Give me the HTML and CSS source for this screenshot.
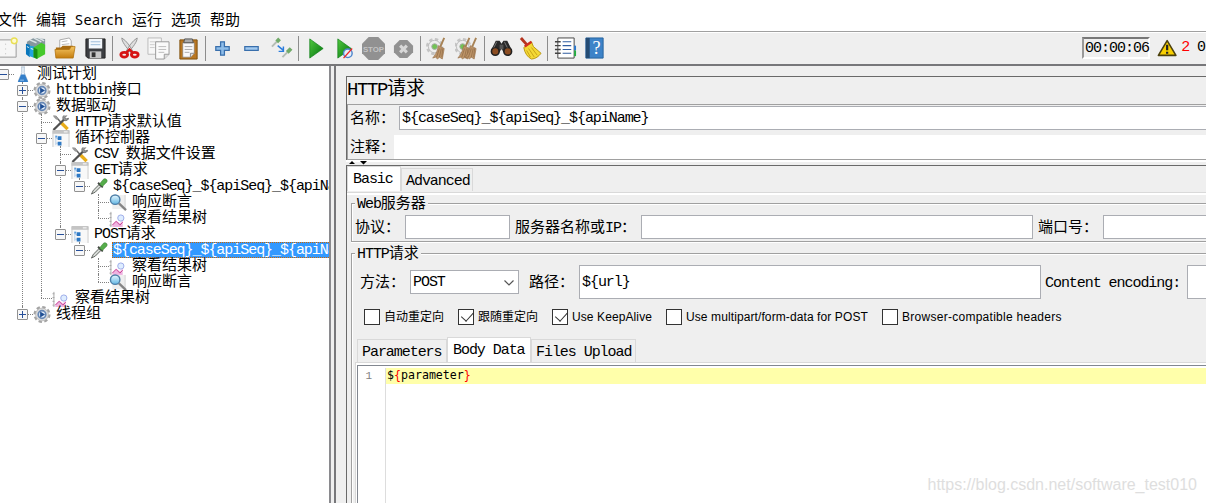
FILE: index.html
```html
<!DOCTYPE html>
<html lang="zh-CN">
<head>
    <meta charset="UTF-8">
    <meta name="viewport" content="width=device-width, initial-scale=1.0">
    <title>HTTP请求</title>
    <link rel="stylesheet" href="styles.css">
</head>
<body>
    <!-- Shared icons -->
    <svg class="defs">
        <defs>
            <linearGradient id="glass" x2="0" y2="1"><stop stop-color="#e8f8ff"/><stop offset="1" stop-color="#62b7e4"/></linearGradient>
            <linearGradient id="green" x2="1" y2="1"><stop stop-color="#52c840"/><stop offset="1" stop-color="#00730c"/></linearGradient>
            <linearGradient id="gold" x2="0" y2="1"><stop stop-color="#f4c562"/><stop offset="1" stop-color="#c57d0d"/></linearGradient>
        </defs>
        <symbol id="gear" viewBox="0 0 18 18">
            <circle cx="9" cy="9" r="7.600" fill="none" stroke="#a3a3a3" stroke-width="2.800" stroke-dasharray="3.500 2.470"/>
            <circle cx="9" cy="9" r="6.800" fill="#dcdcdc" stroke="#b5b5b5" stroke-width=".8"/>
            <circle cx="9" cy="9" r="4" fill="#e4eefa" stroke="#6788b5" stroke-width="1.800"/>
            <path d="M7 5.800L12.200 9 7 12.200z" fill="#1f4f94"/>
        </symbol>
        <symbol id="flask" viewBox="0 0 18 18">
            <path d="M7 1h4M7.7 1v6L4 16h10L10.3 7V1" fill="#edf5fc" stroke="#b0c1d2"/>
            <path d="M7 9L3.500 17h11L11 9z" fill="#347fca"/>
            <path d="M6 15h4" stroke="#98c5ef"/>
        </symbol>
        <symbol id="tools" viewBox="0 0 18 18">
            <path d="M3 2l6 7" stroke="#666" stroke-width="1.6"/>
            <path d="M9 9l7 7" stroke="#e9ad19" stroke-width="3.6"/>
            <path d="M1 17L12.5 5.5" stroke="#505050" stroke-width="2.4"/>
            <path d="M12 1.5c-2 2-1 5 1 5.500s4-1 4-2.500l-3 .8-.8-1.300 2-2.500" fill="#999" stroke="#555" stroke-width=".7"/>
            <path d="M1 1l3 1 2 3-2 1-3-3z" fill="#999"/>
        </symbol>
        <symbol id="loop" viewBox="0 0 18 18">
            <path d="M1 1h16v17H1z" fill="#f8f8f8"/>
            <path d="M.5 1v17M17.500 1v17" stroke="#c8c8c8"/>
            <path d="M0 0h18v4H0z" fill="#c4c4c4"/>
            <path d="M12 2h4" stroke="#fff"/>
            <path d="M3.500 6v10M3.500 9H6M3.500 14H6" stroke="#b9d0e8" fill="none"/>
            <path d="M5.500 6.500h4v4h-4zM5.500 12.500h4v4h-4z" fill="#2d78c4"/>
            <path d="M3 6h2v2H3z" fill="#5c9ede"/>
        </symbol>
        <symbol id="dropper" viewBox="0 0 18 18">
            <path d="M1 17l2-4 6-6 2 2-6 6z" fill="#d6dad6" stroke="#5c615c"/>
            <path d="M8 5l5 5" stroke="#444" stroke-width="2"/>
            <path d="M9.500 6.500l4-5c2-2 5.500.5 3.500 3L12.500 9z" fill="#55ad4b" stroke="#387b31" stroke-width=".6"/>
        </symbol>
        <symbol id="magnifier" viewBox="0 0 18 18">
            <path d="M3 1h14v15H3z" fill="#efefef"/>
            <path d="M16.500 1v14" stroke="#d5d5d5"/>
            <path d="M10 10l7.500 7" stroke="#858585" stroke-width="2.500"/>
            <circle cx="6" cy="6" r="5" fill="url(#glass)" stroke="#4e7fa8" stroke-width="1.500"/>
        </symbol>
        <symbol id="chart" viewBox="0 0 18 18">
            <path d="M1.500 2v16M0 4h2M0 8h2M0 12h2M0 16h2" stroke="#a5a5a5" fill="none"/>
            <path d="M3 18v-3l4-4 4 3 3-3v7z" fill="#efb4e1"/>
            <path d="M3 16l4-4 4 4 3-3" fill="none" stroke="#c64591"/>
            <circle cx="12" cy="8.500" r="3.300" fill="#deedff" stroke="#9aa9e8"/>
        </symbol>
        <symbol id="broom" viewBox="0 0 24 24">
            <path d="M18 1l-4 9" stroke="#a88355" stroke-width="2"/>
            <path d="M12 9l6 3-2 11-3-2-2 2-2-2-3 1c4-5 5-8 6-13z" fill="#bd9468" stroke="#98714a" stroke-width=".7"/>
            <path d="M13 12l-3 9M15 12l-2 9M16.500 12l-1 9" stroke="#8c6845" stroke-width=".7"/>
        </symbol>
        <symbol id="cog" viewBox="0 0 24 24">
            <circle cx="9" cy="10" r="7.500" fill="none" stroke="#c5c5c5" stroke-width="3" stroke-dasharray="3.400 2.500"/>
            <circle cx="9" cy="10" r="6.500" fill="#eee" stroke="#bcbcbc"/>
            <circle cx="9" cy="10" r="3" fill="#71c354" stroke="#aaa"/>
        </symbol>
    </svg>

    <nav class="menu">
        <span>文件</span><span>编辑</span><span class="search">Search</span><span>运行</span><span>选项</span><span>帮助</span>
    </nav>

    <div class="toolbar">
        <div class="tools">
            <i><svg viewBox="0 0 24 24"><path d="M1 3h20v18H1z" fill="#f6f6f6" stroke="#999"/><path d="M10 7v12" stroke="#bbb" stroke-dasharray="1 4"/><circle cx="19" cy="4" r="3" fill="#fffbd0" stroke="#e9df55" stroke-width="1.500"/></svg></i>
            <i><svg viewBox="0 0 24 24"><path d="M2 5l7-4 12 1v10L8 19l-6-2z" fill="#86979e"/><path d="M5 3l7 3M9 1l8 4M14 1l6 3" stroke="#dce4e7" stroke-width="1.500"/><path d="M1 7l4 1v13l-4-3z" fill="#0876bc"/><path d="M5 9l5 1v12l-5-2z" fill="#20a4df"/><path d="M2 10l2 1M6 12l3 1" stroke="#fff"/><path d="M9 11l8-5 4 2v10l-9 5-3-2z" fill="#46c92c"/><path d="M9 11l4 2v10l-4-2z" fill="#198e12"/></svg></i>
            <i><svg viewBox="0 0 24 24"><path d="M6 13V3l10-2 2 3v11z" fill="#fff" stroke="#aaa"/><path d="M8 5l6-1M8 8l8-1M8 11h8" stroke="#bbb"/><path d="M2 11h5l2-2h11v12H2z" fill="#a86b12"/><path d="M1 13h15l2-3h4l-2 12H2z" fill="url(#gold)" stroke="#b0720f" stroke-width=".8"/></svg></i>
            <i><svg viewBox="0 0 24 24"><path d="M2 2h20v20H4l-2-2z" fill="#3c3e42" stroke="#222"/><path d="M5 2h14v10H5z" fill="#f4f8fc"/><path d="M7 5h10M7 8h10" stroke="#9bbbd9"/><path d="M6 15h12v7H6z" fill="#c8c8c8"/><path d="M8 16h4v5H8z" fill="#333"/></svg></i>
            <b></b>
            <i><svg viewBox="0 0 24 24"><path d="M4 1c0 4 4 9 10 16l2-1C13 10 9 4 4 1zM20 1c0 4-4 9-10 16l-2-1C11 10 15 4 20 1z" fill="#dedede" stroke="#929292"/><ellipse cx="6.500" cy="18.500" rx="3.500" ry="2.500" fill="none" stroke="#d61414" stroke-width="3"/><ellipse cx="17.500" cy="18.500" rx="3.500" ry="2.500" fill="none" stroke="#d61414" stroke-width="3"/><path d="M9 16l3-3 3 3" fill="none" stroke="#d61414" stroke-width="2.500"/></svg></i>
            <i><svg viewBox="0 0 24 24"><path d="M1 1h14v17H1z" fill="#f7f7f7" stroke="#bbb"/><path d="M3 5h9M3 8h5M3 11h5" stroke="#ccc"/><path d="M9 5h14v13l-5 5H9z" fill="#fafafa" stroke="#999"/><path d="M12 10h8M12 13h8M12 16h6" stroke="#bbb"/><path d="M18 23v-5h5" fill="#ddd" stroke="#999"/></svg></i>
            <i><svg viewBox="0 0 24 24"><path d="M3 3h18v20H3z" fill="#b97722" stroke="#80500e"/><path d="M6 6h12v11l-4 4H6z" fill="#fafafa" stroke="#777" stroke-width=".6"/><path d="M8 10h8M8 13h8M8 16h5" stroke="#aaa"/><path d="M14 21v-4h4" fill="#ddd" stroke="#888"/><path d="M8 2h8l1 4H7z" fill="#aaa" stroke="#555"/></svg></i>
            <b></b>
            <i><svg viewBox="0 0 24 24"><path d="M10 5h4v5h5v4h-5v5h-4v-5H5v-4h5z" fill="#8ebde9" stroke="#396fac" stroke-width="1.300"/></svg></i>
            <i><svg viewBox="0 0 24 24"><path d="M5 10h14v4H5z" fill="#a2caf0" stroke="#396fac" stroke-width="1.300"/></svg></i>
            <i><svg viewBox="0 0 24 24"><path d="M2 10l5-5M13 21l5-5" stroke="#b5bdb5" stroke-width="2"/><path d="M7 5l3-3M18 16l4-4" stroke="#71aa69" stroke-width="4"/><path d="M8 9l6 5m0-4v5H9" fill="none" stroke="#2a7cdd" stroke-width="1.500"/></svg></i>
            <b></b>
            <i><svg viewBox="0 0 24 24"><path d="M6 2l14 10L6 22z" fill="url(#green)" stroke="#087b10" stroke-width=".7"/></svg></i>
            <i><svg viewBox="0 0 24 24"><path d="M5 2l14 10L5 22z" fill="url(#green)" stroke="#087b10" stroke-width=".7"/><circle cx="15.500" cy="17" r="4.500" fill="#e6effa" stroke="#4f86cc" stroke-width="1.500"/><path d="M11 22l9-10" stroke="#e22" stroke-width="1.300"/></svg></i>
            <i><svg viewBox="0 0 24 24"><path d="M7 0h10l7 7v10l-7 7H7l-7-7V7z" fill="#919191"/><text x="12" y="15.500" text-anchor="middle" class="stop">STOP</text></svg></i>
            <i><svg viewBox="0 0 24 24"><path d="M8 3h8l6 6v7l-6 6H8l-6-6V9z" fill="#929292"/><path d="M8.500 9l7 7M15.500 9l-7 7" stroke="#d8d8d8" stroke-width="3.200"/></svg></i>
            <b></b>
            <i><svg viewBox="0 0 24 24"><use href="#cog"/><use href="#broom" x="1"/></svg></i>
            <i><svg viewBox="0 0 24 24"><use href="#cog" x="-1"/><use href="#broom" x="-3"/><use href="#broom" x="4"/></svg></i>
            <b></b>
            <i><svg viewBox="0 0 24 24"><path d="M6 4h4l2 3 2-3h4l5 10-9 2-2-4-2 4-9-2z" fill="#292929"/><path d="M10 8h4v5h-4z" fill="#555"/><circle cx="5.500" cy="15" r="4" fill="#8c4d22" stroke="#222" stroke-width="1.700"/><circle cx="18.500" cy="15" r="4" fill="#8c4d22" stroke="#222" stroke-width="1.700"/><path d="M7 5L4 11M15 5l3 6" stroke="#777"/></svg></i>
            <i><svg viewBox="0 0 24 24"><path d="M2 1l7 8" stroke="#b5341f" stroke-width="3"/><path d="M5 11l8-6 2 5 8 7c-2 3-6 6-10 6-4-2-7-6-8-12z" fill="#f4d936" stroke="#b99510"/><path d="M6 10l7-5" stroke="#cf3020" stroke-width="2.500"/><path d="M10 12l6 9M13 11l6 8M8 14l4 7" stroke="#c7a018"/></svg></i>
            <b></b>
            <i><svg viewBox="0 0 24 24"><path d="M4 1h17v21H4z" fill="#fff" stroke="#444"/><path d="M9 5h9M9 9h9M9 13h9M9 17h9" stroke="#315da0" stroke-width="1.200"/><path d="M1 5h6M1 9h6M1 13h6M1 17h6" stroke="#444" stroke-width="1.500"/><path d="M22 9v5" stroke="#2877cf" stroke-width="2"/><path d="M22 14v6" stroke="#24ad40" stroke-width="2"/></svg></i>
            <i><svg viewBox="0 0 24 24"><path d="M3 1h18v21H3z" fill="#3d83c8" stroke="#27639e"/><path d="M3 1h4v21H3z" fill="#244b73"/><text x="14" y="18" text-anchor="middle" class="help">?</text></svg></i>
        </div>
        <div class="status">
            <span class="timer">00:00:06</span>
            <svg class="warn" viewBox="0 0 22 20"><path d="M11 2L20.500 18h-19z" fill="#f8cf00" stroke="#4c410d" stroke-width="1.700" stroke-linejoin="round"/><path d="M11 6.500v6M11 14v2.300" stroke="#222" stroke-width="2.400"/></svg>
            <span class="errors">2</span>
            <span class="threads">0</span>
        </div>
    </div>

    <main>
        <aside>
            <ul class="tree">
                <li>
                    <div class="node"><em class="minus"></em><svg><use href="#flask"/></svg><span>测试计划</span></div>
                    <ul>
                        <li><div class="node"><em class="plus"></em><svg><use href="#gear"/></svg><span><q>httbbin</q>接口</span></div></li>
                        <li>
                            <div class="node"><em class="minus"></em><svg><use href="#gear"/></svg><span>数据驱动</span></div>
                            <ul>
                                <li><div class="node"><em></em><svg><use href="#tools"/></svg><span><q>HTTP</q>请求默认值</span></div></li>
                                <li>
                                    <div class="node"><em class="minus"></em><svg><use href="#loop"/></svg><span>循环控制器</span></div>
                                    <ul>
                                        <li><div class="node"><em></em><svg><use href="#tools"/></svg><span><q>CSV </q>数据文件设置</span></div></li>
                                        <li>
                                            <div class="node"><em class="minus"></em><svg><use href="#loop"/></svg><span><q>GET</q>请求</span></div>
                                            <ul>
                                                <li>
                                                    <div class="node"><em class="minus"></em><svg><use href="#dropper"/></svg><span><q>${caseSeq}_${apiSeq}_${apiName}</q></span></div>
                                                    <ul>
                                                        <li><div class="node"><em></em><svg><use href="#magnifier"/></svg><span>响应断言</span></div></li>
                                                        <li><div class="node"><em></em><svg><use href="#chart"/></svg><span>察看结果树</span></div></li>
                                                    </ul>
                                                </li>
                                            </ul>
                                        </li>
                                        <li>
                                            <div class="node"><em class="minus"></em><svg><use href="#loop"/></svg><span><q>POST</q>请求</span></div>
                                            <ul>
                                                <li>
                                                    <div class="node"><em class="minus"></em><svg><use href="#dropper"/></svg><span class="selected"><q>${caseSeq}_${apiSeq}_${apiName}</q></span></div>
                                                    <ul>
                                                        <li><div class="node"><em></em><svg><use href="#chart"/></svg><span>察看结果树</span></div></li>
                                                        <li><div class="node"><em></em><svg><use href="#magnifier"/></svg><span>响应断言</span></div></li>
                                                    </ul>
                                                </li>
                                            </ul>
                                        </li>
                                    </ul>
                                </li>
                                <li><div class="node"><em></em><svg><use href="#chart"/></svg><span>察看结果树</span></div></li>
                            </ul>
                        </li>
                        <li><div class="node"><em class="plus"></em><svg><use href="#gear"/></svg><span>线程组</span></div></li>
                    </ul>
                </li>
            </ul>
        </aside>

        <section class="editor">
            <div class="header">
                <h1><q>HTTP</q>请求</h1>
                <div class="names">
                    <div class="row name"><label>名称：</label><div class="field"><q>${caseSeq}_${apiSeq}_${apiName}</q></div></div>
                    <div class="row comment"><label>注释：</label><div class="blank"></div></div>
                </div>
            </div>
            <div class="divider"><svg viewBox="0 0 20 4"><path d="M0 3l3-3 3 3zM11 0h7l-3.500 3.500z"/></svg></div>

            <div class="request">
                <div class="tabs main-tabs"><span class="active"><q>Basic</q></span><span><q>Advanced</q></span></div>
                <div class="group server">
                    <div class="legend"><q>Web</q>服务器</div>
                    <div class="row">
                        <label class="protocol">协议：</label><div class="field w-protocol"></div>
                        <label class="host">服务器名称或<q>IP</q>：</label><div class="field w-host"></div>
                        <label class="port">端口号：</label><div class="field w-port"></div>
                    </div>
                </div>
                <div class="group http">
                    <div class="legend"><q>HTTP</q>请求</div>
                    <div class="row path-row">
                        <label class="method">方法：</label>
                        <div class="field select"><q>POST</q><svg viewBox="0 0 10 6"><path d="M.5.5L5 5 9.500.5" fill="none" stroke="#555" stroke-width="1.200"/></svg></div>
                        <label class="path">路径：</label>
                        <div class="field w-path"><q>${url}</q></div>
                        <label class="encoding"><q>Content encoding:</q></label>
                        <div class="field w-encoding"></div>
                    </div>
                    <div class="checks">
                        <label><i></i>自动重定向</label>
                        <label><i class="on"></i>跟随重定向</label>
                        <label class="keep"><i class="on"></i>Use KeepAlive</label>
                        <label class="multi"><i></i>Use multipart/form-data for POST</label>
                        <label class="compat"><i></i>Browser-compatible headers</label>
                    </div>
                    <div class="tabs body-tabs"><span><q>Parameters</q></span><span class="active"><q>Body Data</q></span><span><q>Files Upload</q></span></div>
                    <div class="body-panel">
                        <div class="code">
                            <div class="gutter">1</div>
                            <div class="lines"><div class="line">$<s>{</s>parameter<s>}</s></div></div>
                        </div>
                    </div>
                </div>
            </div>
        </section>
    </main>
    <div class="watermark">https://blog.csdn.net/software_test010</div>
</body>
</html>
```
FILE: styles.css
```css
* {
    box-sizing: border-box;
}
body {
    margin: 0;
    width: 1206px;
    height: 503px;
    overflow: hidden;
    display: flex;
    flex-direction: column;
    background-color: #efefef;
    color: #000;
    font-family: "Liberation Mono", "Noto Sans CJK SC", monospace;
    font-size: 15px;
    line-height: 16px;
}
/* half width latin text */
q {
    quotes: none;
    letter-spacing: -1.05px;
    white-space: pre;
}
q::before,
q::after {
    content: none;
}
i,
em {
    font-style: normal;
}
.defs {
    position: absolute;
    width: 0;
    height: 0;
}

.menu {
    display: flex;
    gap: 9px;
    height: 31px;
    flex: none;
    margin-left: -3px;
    padding-top: 9px;
    background-color: #fff;
    font-family: "Noto Sans", "Noto Sans CJK SC", sans-serif;
    line-height: 20px;
    white-space: nowrap;
}
.menu .search {
    width: 48px;
    font-size: 14.5px;
    letter-spacing: 0.4px;
}

.toolbar {
    display: flex;
    justify-content: space-between;
    height: 35px;
    flex: none;
    border-top: 1px solid #a0a0a0;
    border-bottom: 2px solid #77777a;
    box-shadow: inset 0 1px #fff;
}
.tools {
    display: flex;
    align-items: center;
    margin-left: -7px;
}
.tools i {
    display: flex;
    justify-content: center;
    width: 29.2px;
}
.tools svg {
    width: 23px;
    height: 23px;
}
.tools b {
    width: 1px;
    height: 25px;
    margin: 0 2.2px;
    background-color: #8d8d8d;
}
.stop {
    font: bold 8.2px "Liberation Sans", sans-serif;
    fill: #c4c4c4;
}
.help {
    font: 19px "Liberation Serif", serif;
    fill: #fff;
}
.status {
    display: flex;
    align-items: center;
    width: 124px;
    flex: none;
    overflow: hidden;
}
.timer {
    width: 68px;
    height: 22px;
    padding-left: 1px;
    border: 2px solid;
    border-color: #777 #fff #fff #999;
    letter-spacing: -1px;
    line-height: 20px;
}
.warn {
    width: 22px;
    height: 20px;
    margin: 0 4px 0 7px;
}
.errors {
    width: 17px;
    color: #f00;
}

main {
    display: flex;
    flex: 1;
    min-height: 0;
}
aside {
    width: 331px;
    flex: none;
    overflow: hidden;
    background-color: #fff;
    border-right: 2px solid #8a8a8e;
}
.tree,
.tree ul {
    margin: 0;
    padding: 0;
    list-style: none;
}
.tree {
    margin-left: -2px;
    width: 500px;
}
.tree ul {
    padding-left: 19px;
}
.tree li {
    position: relative;
}
.tree ul > li::before {
    content: "";
    position: absolute;
    left: 5px;
    top: 0;
    height: 100%;
    border-left: 1px dotted #808080;
}
.tree ul > li:last-child::before {
    height: 8px;
}
.node {
    display: flex;
    align-items: center;
    height: 16px;
    white-space: nowrap;
}
.node em {
    position: relative;
    width: 11px;
    height: 11px;
    margin-right: 5px;
    flex: none;
}
.node em::before {
    content: "";
    position: absolute;
    left: 5px;
    top: 5px;
    width: 11px;
    border-top: 1px dotted #808080;
}
.minus::after,
.plus::after {
    content: "";
    position: absolute;
    inset: 0;
    border: 1px solid #919191;
    border-radius: 1px;
    background: linear-gradient(#264f99, #264f99) center / 7px 1px no-repeat, #f7f7f7;
}
.plus::after {
    background: linear-gradient(#264f99, #264f99) center / 7px 1px no-repeat, linear-gradient(#264f99, #264f99) center / 1px 7px no-repeat, #f7f7f7;
}
.node svg {
    position: relative;
    width: 18px;
    height: 17px;
    margin-right: 4px;
    flex: none;
}
.node span {
    height: 16px;
    line-height: 18px;
    padding: 0 1px;
}
.selected {
    background-color: #3399ff;
    color: #fff;
    outline: 1px dotted #cc6600;
    outline-offset: -1px;
}

.editor {
    flex: 1;
    min-width: 0;
    margin-left: 3px;
    padding: 10px 0 0 10px;
    border-left: 2px solid #77777a;
    white-space: nowrap;
}
.header {
    height: 84px;
    border-top: 1px solid #696969;
    border-left: 1px solid #696969;
}
h1 {
    margin: 0;
    height: 27px;
    font-size: 19px;
    font-weight: normal;
    line-height: 26px;
}
h1 q {
    letter-spacing: -1.4px;
}
.names {
    height: 56px;
    padding-top: 1px;
    border: 1px solid #a0a0a0;
    border-right: none;
}
.row {
    display: flex;
    align-items: center;
}
.row label {
    flex: none;
    padding-top: 3px;
}
.name label,
.comment label {
    padding-left: 2px;
}
.name label {
    width: 51px;
}
.comment label {
    width: 46px;
}
.blank {
    flex: 1;
    height: 24px;
    background-color: #fff;
}
.comment {
    margin-top: 5px;
}
.field {
    display: flex;
    align-items: center;
    height: 24px;
    flex: none;
    padding: 2px 0 0 2px;
    background-color: #fff;
    border: 1px solid #abadb3;
}
.name .field {
    flex: 1;
    border-right: none;
}
.divider {
    height: 5px;
    padding-left: 3px;
    background: linear-gradient(#fff, #fff) 0 0 / 100% 2px no-repeat;
}
.divider svg {
    display: block;
    width: 20px;
    height: 4px;
    position: relative;
    top: 1px;
}

.request {
    height: 338px;
    border-top: 1px solid #696969;
    border-left: 1px solid #696969;
}
.tabs {
    display: flex;
    align-items: flex-end;
}
.tabs span {
    height: 23px;
    padding: 5px 0 0 4px;
    border: 1px solid #d9d9d9;
    border-bottom: none;
}
.tabs .active {
    height: 25px;
    padding-left: 5px;
    background-color: #fff;
}
.main-tabs {
    height: 29px;
    padding-bottom: 2px;
    border-bottom: 2px solid #fff;
    box-shadow: inset 0 -1px #d9d9d9;
}
.main-tabs span:first-child {
    width: 54px;
}
.main-tabs span:last-child {
    width: 72px;
}
.group {
    position: relative;
    margin-left: 4px;
    border: 1px solid #a0a0a0;
    border-right: none;
    box-shadow: inset 1px 1px #fff, 0 1px #fff;
}
.legend {
    position: absolute;
    left: 3px;
    top: -7px;
    padding: 0 2px;
    background-color: #efefef;
}
.server {
    height: 39px;
    margin-top: 8px;
    padding: 11px 0 0 3px;
}
.http {
    height: 260px;
    margin-top: 11px;
}
.protocol {
    width: 50px;
}
.w-protocol {
    width: 105px;
}
.host {
    width: 131px;
}
.row .host,
.row .port {
    padding-left: 5px;
}
.w-host {
    width: 392px;
}
.port {
    width: 70px;
}
.w-port {
    width: 110px;
}
.path-row {
    padding: 11px 0 0 8px;
}
.method {
    width: 50px;
}
.select {
    width: 109px;
    justify-content: space-between;
    padding-right: 4px;
}
.select svg {
    width: 10px;
    height: 6px;
}
.row .path {
    width: 60px;
    padding-left: 10px;
}
.w-path {
    width: 462px;
    height: 34px;
}
.row .encoding {
    width: 146px;
    padding-left: 4px;
}
.w-encoding {
    width: 40px;
    height: 34px;
}
.checks {
    display: flex;
    height: 16px;
    margin: 10px 0 0 12px;
    font-family: "Liberation Sans", "Noto Sans CJK SC", sans-serif;
    font-size: 12px;
}
.checks label {
    display: flex;
    width: 94px;
    flex: none;
}
.checks .keep {
    width: 114px;
    letter-spacing: 0.1px;
}
.checks .multi {
    width: 216px;
    letter-spacing: 0.1px;
}
.checks .compat {
    width: 200px;
    letter-spacing: 0.27px;
}
.checks i {
    width: 16px;
    height: 16px;
    flex: none;
    margin-right: 4px;
    background-color: #fff;
    border: 1px solid #333;
}
.checks .on::after {
    content: "";
    display: block;
    width: 6px;
    height: 11px;
    margin: -1px 0 0 5px;
    border: solid #333;
    border-width: 0 1.5px 1.5px 0;
    transform: rotate(42deg);
}
.body-tabs {
    height: 25px;
    margin: 12px 0 0 5px;
}
.body-tabs span {
    width: 90px;
}
.body-tabs .active {
    width: 84px;
}
.body-tabs span:last-child {
    width: 105px;
}
.body-panel {
    height: 150px;
    margin-left: 3px;
    padding: 2px 0 0 1px;
    border-top: 1px solid #d9d9d9;
    border-left: 1px solid #d9d9d9;
    background-color: #fff;
}
.code {
    display: flex;
    height: 145px;
    padding-top: 2px;
    border-top: 1px solid #828790;
    border-left: 1px solid #828790;
    font-family: "DejaVu Sans Mono", monospace;
    font-size: 11.6px;
}
.gutter {
    width: 28px;
    padding: 0 13px 0 0;
    border-right: 1px solid #ddd;
    color: #808080;
    font-family: "Liberation Mono", monospace;
    font-size: 11px;
    text-align: right;
}
.lines {
    flex: 1;
}
.line {
    height: 16px;
    padding-left: 1px;
    background-color: #ffffaa;
    line-height: 15px;
}
.line s {
    color: #f00;
    text-decoration: none;
}
.watermark {
    position: absolute;
    right: 9px;
    bottom: 8px;
    color: #dedede;
    font: 16px/20px "Liberation Sans", sans-serif;
}
```
